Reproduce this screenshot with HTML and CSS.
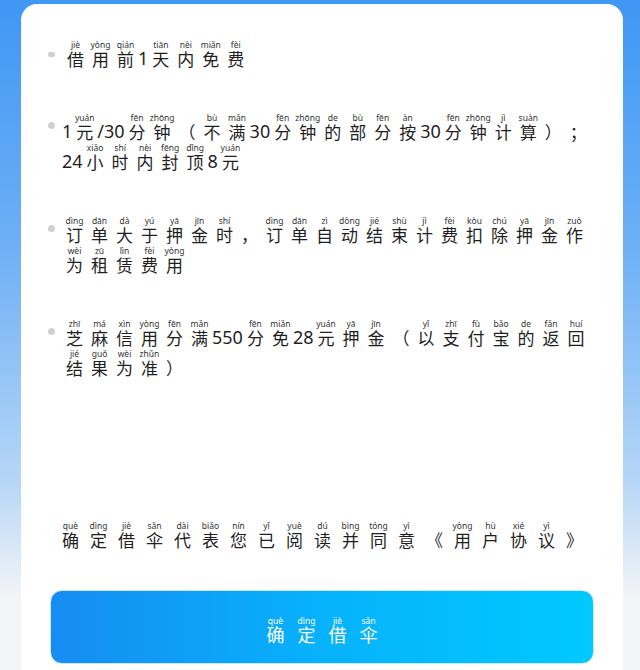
FILE: index.html
```html
<!DOCTYPE html>
<html lang="zh-CN">
<head>
<meta charset="utf-8">
<title>借伞须知</title>
<link rel="stylesheet" href="styles.css">
</head>
<body>
<div class="card">
  <div class="rules">
    <div class="item">
      <span class="dot dot-first"></span>
      <div class="text"><span class="u"><span class="py">jiè</span><span class="hz">借</span></span><span class="u"><span class="py">yòng</span><span class="hz">用</span></span><span class="u"><span class="py">qián</span><span class="hz">前</span></span><span class="n"><span class="py"></span><span class="num">1</span></span><span class="u"><span class="py">tiān</span><span class="hz">天</span></span><span class="u"><span class="py">nèi</span><span class="hz">内</span></span><span class="u"><span class="py">miǎn</span><span class="hz">免</span></span><span class="u"><span class="py">fèi</span><span class="hz">费</span></span></div>
    </div>
    <div class="item">
      <span class="dot"></span>
      <div class="text"><span class="n"><span class="py"></span><span class="num">1</span></span><span class="u"><span class="py">yuán</span><span class="hz">元</span></span><span class="n"><span class="py"></span><span class="num">/30</span></span><span class="u"><span class="py">fēn</span><span class="hz">分</span></span><span class="u"><span class="py">zhōng</span><span class="hz">钟</span></span><span class="u"><span class="py"></span><span class="hz">（</span></span><span class="u"><span class="py">bù</span><span class="hz">不</span></span><span class="u"><span class="py">mǎn</span><span class="hz">满</span></span><span class="n"><span class="py"></span><span class="num">30</span></span><span class="u"><span class="py">fēn</span><span class="hz">分</span></span><span class="u"><span class="py">zhōng</span><span class="hz">钟</span></span><span class="u"><span class="py">de</span><span class="hz">的</span></span><span class="u"><span class="py">bù</span><span class="hz">部</span></span><span class="u"><span class="py">fēn</span><span class="hz">分</span></span><span class="u"><span class="py">àn</span><span class="hz">按</span></span><span class="n"><span class="py"></span><span class="num">30</span></span><span class="u"><span class="py">fēn</span><span class="hz">分</span></span><span class="u"><span class="py">zhōng</span><span class="hz">钟</span></span><span class="u"><span class="py">jì</span><span class="hz">计</span></span><span class="u"><span class="py">suàn</span><span class="hz">算</span></span><span class="u"><span class="py"></span><span class="hz">）</span></span><span class="u"><span class="py"></span><span class="hz">；</span></span><span class="n"><span class="py"></span><span class="num">24</span></span><span class="u"><span class="py">xiǎo</span><span class="hz">小</span></span><span class="u"><span class="py">shí</span><span class="hz">时</span></span><span class="u"><span class="py">nèi</span><span class="hz">内</span></span><span class="u"><span class="py">fēng</span><span class="hz">封</span></span><span class="u"><span class="py">dǐng</span><span class="hz">顶</span></span><span class="n"><span class="py"></span><span class="num">8</span></span><span class="u"><span class="py">yuán</span><span class="hz">元</span></span></div>
    </div>
    <div class="item">
      <span class="dot"></span>
      <div class="text"><span class="u"><span class="py">dìng</span><span class="hz">订</span></span><span class="u"><span class="py">dān</span><span class="hz">单</span></span><span class="u"><span class="py">dà</span><span class="hz">大</span></span><span class="u"><span class="py">yú</span><span class="hz">于</span></span><span class="u"><span class="py">yā</span><span class="hz">押</span></span><span class="u"><span class="py">jīn</span><span class="hz">金</span></span><span class="u"><span class="py">shí</span><span class="hz">时</span></span><span class="u"><span class="py"></span><span class="hz">，</span></span><span class="u"><span class="py">dìng</span><span class="hz">订</span></span><span class="u"><span class="py">dān</span><span class="hz">单</span></span><span class="u"><span class="py">zì</span><span class="hz">自</span></span><span class="u"><span class="py">dòng</span><span class="hz">动</span></span><span class="u"><span class="py">jié</span><span class="hz">结</span></span><span class="u"><span class="py">shù</span><span class="hz">束</span></span><span class="u"><span class="py">jì</span><span class="hz">计</span></span><span class="u"><span class="py">fèi</span><span class="hz">费</span></span><span class="u"><span class="py">kòu</span><span class="hz">扣</span></span><span class="u"><span class="py">chú</span><span class="hz">除</span></span><span class="u"><span class="py">yā</span><span class="hz">押</span></span><span class="u"><span class="py">jīn</span><span class="hz">金</span></span><span class="u"><span class="py">zuò</span><span class="hz">作</span></span><span class="u"><span class="py">wèi</span><span class="hz">为</span></span><span class="u"><span class="py">zū</span><span class="hz">租</span></span><span class="u"><span class="py">lìn</span><span class="hz">赁</span></span><span class="u"><span class="py">fèi</span><span class="hz">费</span></span><span class="u"><span class="py">yòng</span><span class="hz">用</span></span></div>
    </div>
    <div class="item">
      <span class="dot"></span>
      <div class="text"><span class="u"><span class="py">zhī</span><span class="hz">芝</span></span><span class="u"><span class="py">má</span><span class="hz">麻</span></span><span class="u"><span class="py">xìn</span><span class="hz">信</span></span><span class="u"><span class="py">yòng</span><span class="hz">用</span></span><span class="u"><span class="py">fēn</span><span class="hz">分</span></span><span class="u"><span class="py">mǎn</span><span class="hz">满</span></span><span class="n"><span class="py"></span><span class="num">550</span></span><span class="u"><span class="py">fēn</span><span class="hz">分</span></span><span class="u"><span class="py">miǎn</span><span class="hz">免</span></span><span class="n"><span class="py"></span><span class="num">28</span></span><span class="u"><span class="py">yuán</span><span class="hz">元</span></span><span class="u"><span class="py">yā</span><span class="hz">押</span></span><span class="u"><span class="py">jīn</span><span class="hz">金</span></span><span class="u"><span class="py"></span><span class="hz">（</span></span><span class="u"><span class="py">yǐ</span><span class="hz">以</span></span><span class="u"><span class="py">zhī</span><span class="hz">支</span></span><span class="u"><span class="py">fù</span><span class="hz">付</span></span><span class="u"><span class="py">bǎo</span><span class="hz">宝</span></span><span class="u"><span class="py">de</span><span class="hz">的</span></span><span class="u"><span class="py">fǎn</span><span class="hz">返</span></span><span class="u"><span class="py">huí</span><span class="hz">回</span></span><span class="u"><span class="py">jié</span><span class="hz">结</span></span><span class="u"><span class="py">guǒ</span><span class="hz">果</span></span><span class="u"><span class="py">wèi</span><span class="hz">为</span></span><span class="u"><span class="py">zhǔn</span><span class="hz">准</span></span><span class="u"><span class="py"></span><span class="hz">）</span></span></div>
    </div>
  </div>

  <div class="agree"><span class="u"><span class="py">què</span><span class="hz">确</span></span><span class="u"><span class="py">dìng</span><span class="hz">定</span></span><span class="u"><span class="py">jiè</span><span class="hz">借</span></span><span class="u"><span class="py">sǎn</span><span class="hz">伞</span></span><span class="u"><span class="py">dài</span><span class="hz">代</span></span><span class="u"><span class="py">biǎo</span><span class="hz">表</span></span><span class="u"><span class="py">nín</span><span class="hz">您</span></span><span class="u"><span class="py">yǐ</span><span class="hz">已</span></span><span class="u"><span class="py">yuè</span><span class="hz">阅</span></span><span class="u"><span class="py">dú</span><span class="hz">读</span></span><span class="u"><span class="py">bìng</span><span class="hz">并</span></span><span class="u"><span class="py">tóng</span><span class="hz">同</span></span><span class="u"><span class="py">yì</span><span class="hz">意</span></span><span class="u"><span class="py"></span><span class="hz">《</span></span><span class="u"><span class="py">yòng</span><span class="hz">用</span></span><span class="u"><span class="py">hù</span><span class="hz">户</span></span><span class="u"><span class="py">xié</span><span class="hz">协</span></span><span class="u"><span class="py">yì</span><span class="hz">议</span></span><span class="u"><span class="py"></span><span class="hz">》</span></span></div>

  <button class="confirm" type="button"><span class="u"><span class="py">què</span><span class="hz">确</span></span><span class="u"><span class="py">dìng</span><span class="hz">定</span></span><span class="u"><span class="py">jiè</span><span class="hz">借</span></span><span class="u"><span class="py">sǎn</span><span class="hz">伞</span></span></button>
</div>
</body>
</html>
```

FILE: styles.css
```css
html, body {
  margin: 0;
  padding: 0;
}

body {
  width: 640px;
  height: 670px;
  overflow: hidden;
  background: linear-gradient(to bottom, #3f97f4 0px, #6fb0f5 250px, #b5d6f7 480px, #f4f5f7 600px);
  font-family: "Noto Sans CJK SC", "Noto Sans", sans-serif;
  color: #1f1f1f;
}

.card {
  margin: 4px 17px 0 21px;
  height: 666px;
  background: #ffffff;
  border-radius: 16px 16px 0 0;
  padding: 35px 23px 0 27px;
  box-sizing: border-box;
}

.rules {
  display: flex;
  flex-direction: column;
  gap: 43px;
}

.item {
  display: flex;
  align-items: flex-start;
}

.dot {
  flex: none;
  width: 7px;
  height: 7px;
  border-radius: 50%;
  background: #d0d0d0;
  margin-top: 10px;
  margin-right: 7px;
}

.dot-first {
  height: 5px;
  border-radius: 2px;
  margin-top: 13px;
  margin-right: 8px;
}

.text,
.agree,
.confirm {
  font-size: 0;
}

.text {
  flex: 1;
}

.u,
.n {
  display: inline-flex;
  flex-direction: column;
  align-items: center;
  vertical-align: top;
}

.u {
  width: 25px;
}

.py {
  height: 11px;
  font-family: "Noto Sans", sans-serif;
  font-size: 8.5px;
  line-height: 11px;
  white-space: nowrap;
  color: #333333;
}

.hz {
  margin-top: -2px;
  font-family: "Noto Sans CJK SC", "Noto Sans", sans-serif;
  font-size: 17px;
  line-height: 21px;
  white-space: nowrap;
  color: #1f1f1f;
}

.num {
  margin-top: -2px;
  font-family: "Noto Sans", sans-serif;
  font-size: 18px;
  line-height: 21px;
  white-space: nowrap;
  color: #1f1f1f;
}

.agree {
  margin: 142px 0 0 -3px;
  text-align: center;
}

.agree .u {
  width: 28px;
}

.confirm {
  display: block;
  width: 544px;
  height: 74px;
  margin: 40px 0 0 2px;
  border: 1px solid #c8e8fb;
  border-radius: 12px;
  background: linear-gradient(to right, #168cf2 0%, #07b2fb 50%, #00c9ff 100%);
  text-align: center;
  padding: 6px 0 0;
  cursor: pointer;
}

.confirm .u {
  width: 31px;
}

.confirm .hz {
  font-size: 18px;
}

.confirm .py,
.confirm .hz {
  color: #ffffff;
}
```
